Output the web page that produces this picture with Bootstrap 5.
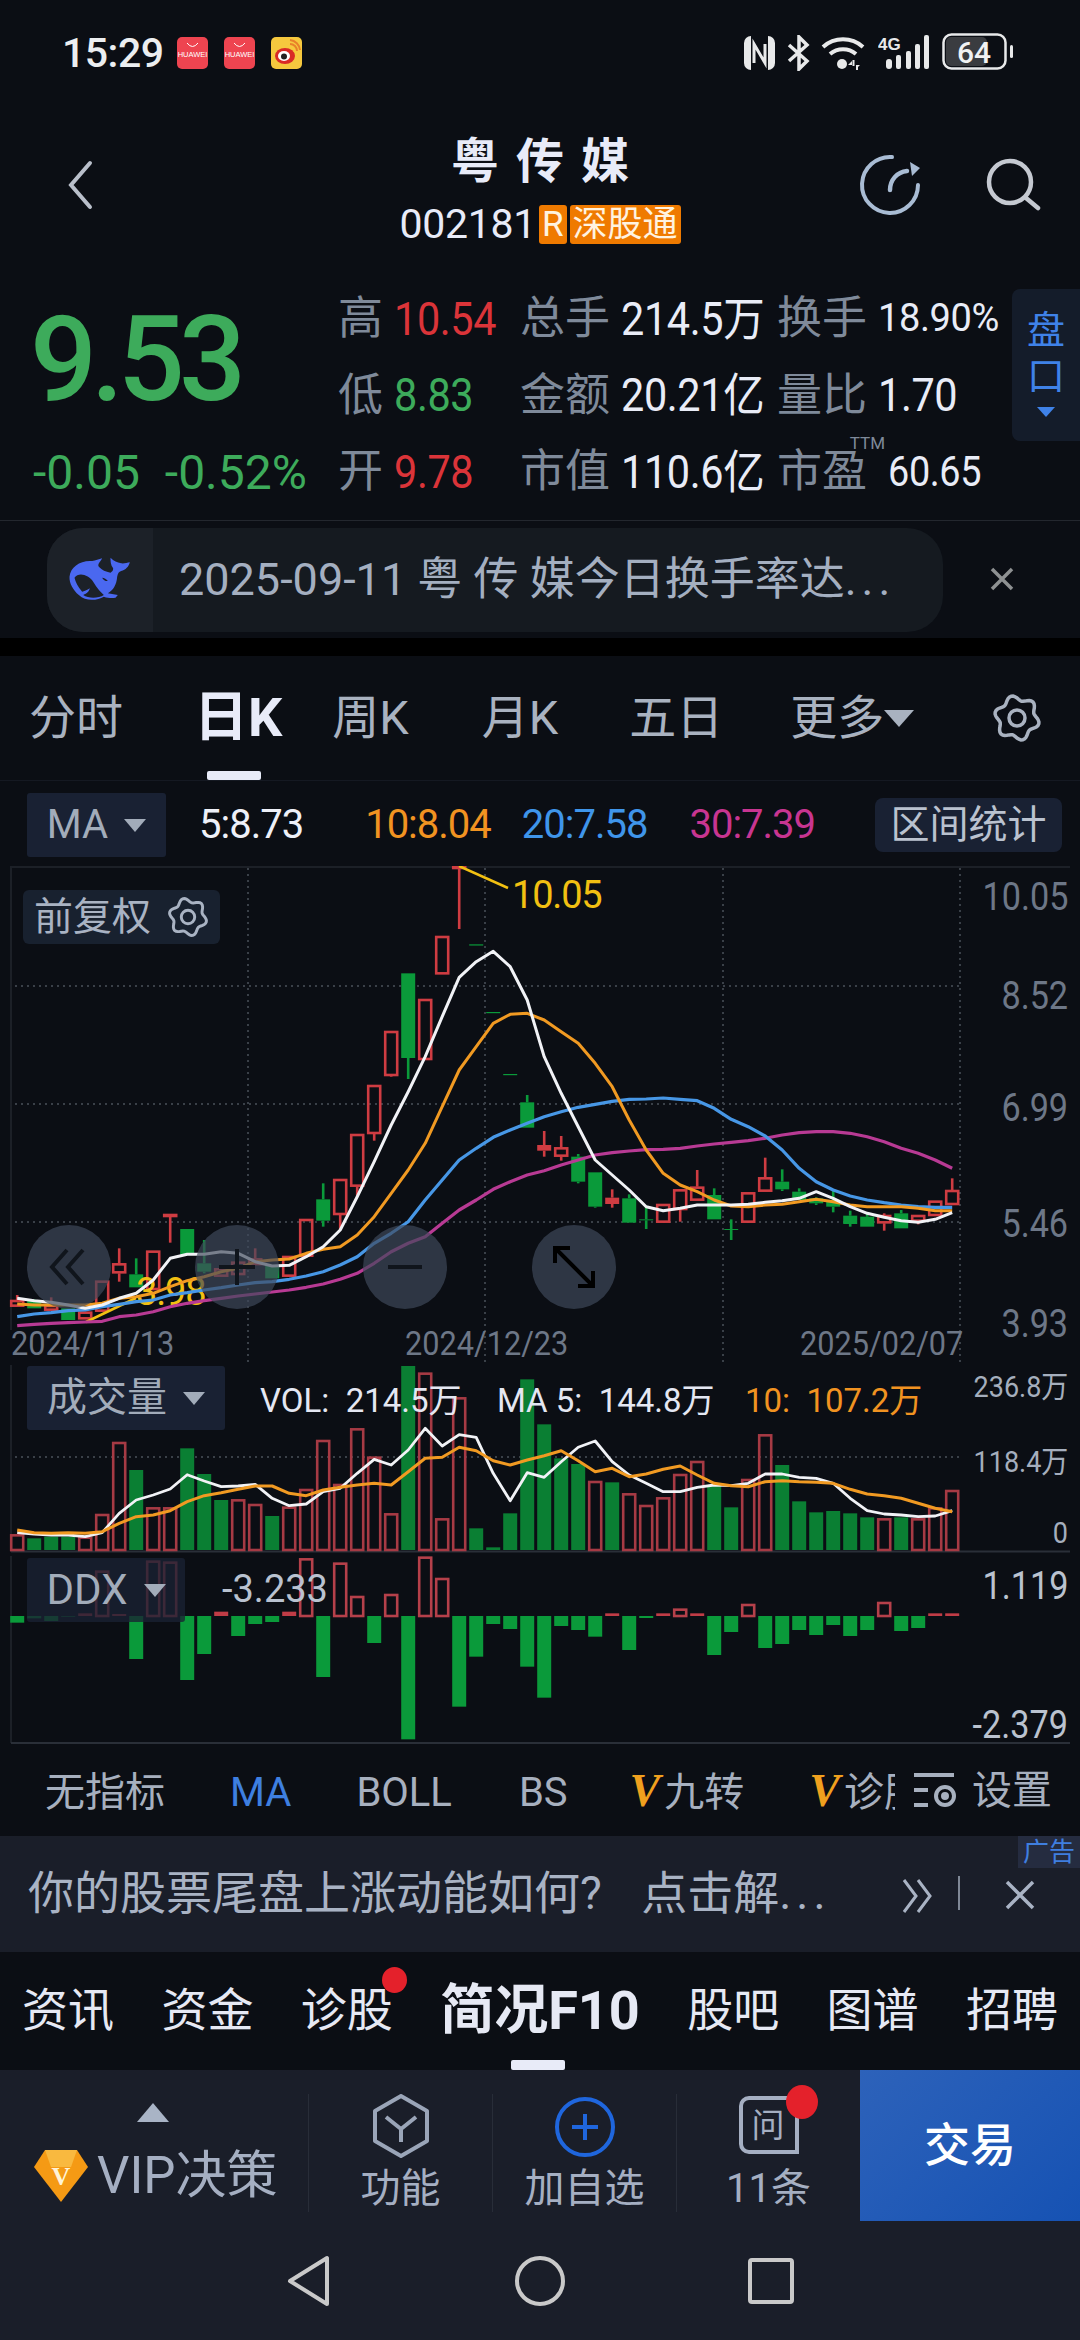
<!DOCTYPE html>
<html lang="zh-CN">
<head>
<meta charset="UTF-8">
<meta name="viewport" content="width=device-width, initial-scale=1.0">
<title>粤传媒</title>
<link href="https://cdn.jsdelivr.net/npm/bootstrap@5.3.0/dist/css/bootstrap.min.css" rel="stylesheet">
<style>
body{width:1080px;height:2340px;margin:0;overflow:hidden;background:#0b0e14;color:#e9ecf7;
  font-family:Roboto,"Noto Sans CJK SC",sans-serif;font-size:38px;line-height:1.2}
svg{display:block}
.dots{letter-spacing:5px}

/* status bar */
.sbar{height:105px;padding:33px 66px 0 62px}
.sbar-time{font-size:41px;font-weight:500;color:#eceef0;line-height:40px;margin-right:13px;letter-spacing:-.5px}
.sbar-app{width:31px;height:32px;margin-right:16px;margin-top:4px}

/* header */
.hdr{height:160px}
.hdr-side{width:260px;height:100%}
.hdr-title{font-size:48px;font-weight:700;letter-spacing:17px;margin-right:-17px;line-height:58px;color:#e8ebf8;margin-top:28px}
.hdr-code{font-size:41px;line-height:46px;margin-top:10px;color:#e8ebf8;letter-spacing:-.3px}
.hdr-tag{background:#ef7a00;border-radius:3px;color:#fff3e0;font-size:35px;line-height:39px;height:39px;padding:0 3px;margin-left:3px;letter-spacing:0}

/* quote */
.quote{height:255px}
.qprice{width:338px;padding-left:30px;flex:none}
.qprice-big{font-size:118px;line-height:118px;color:#3dab5b;letter-spacing:-6px;margin-top:36px;font-weight:500}
.qprice-sub{font-size:48px;color:#3dab5b;margin-top:26px;line-height:56px;padding-left:3px}
.qprice-sub span+span{margin-left:25px}
.qgrid{display:grid;grid-template-columns:182px 257px 235px;grid-auto-rows:76.5px;padding-top:16px;flex:none}
.qcell{display:flex;align-items:center;white-space:nowrap}
.qlb{font-size:45px;color:#7f8a9a;margin-right:11px}
.qval{display:inline-block;font-size:46px;color:#e9ecf7;transform:scaleX(.9);transform-origin:0 50%;letter-spacing:-.4px}
.qval.sm{font-size:38px;transform:none}
.qval.pe{font-size:42px;margin-left:10px}
.cred{color:#db3439}.cgreen{color:#3dab5b}
.qttm{position:relative}
.qttm i{position:absolute;top:-12px;right:-18px;font-style:normal;font-size:17px;line-height:20px;color:#7f8a9a}
.sidetab{margin-left:auto;margin-top:24px;width:68px;height:152px;background:#141c2a;border-radius:8px 0 0 8px;color:#3f82e8;
  font-size:38px;line-height:46px;padding-top:18px}
.tri-b{width:0;height:0;border-left:9px solid transparent;border-right:9px solid transparent;border-top:10px solid #3f82e8;margin-top:8px}

/* banner */
.bnr-row{height:118px;border-top:1px solid #23272e;padding:7px 0 0 47px}
.bnr{width:896px;height:104px;background:#151a20;border-radius:36px;overflow:hidden}
.bnr-logo{width:106px;height:100%;background:#1c2128}
.bnr-text{font-size:45px;color:#a4afc0;margin-left:26px;white-space:pre}
.gap-black{height:18px;background:#000}

/* period tabs */
.tabs{height:124px;padding-left:29px;color:#a9b2c0;font-size:47px}
.tabs .on{font-size:54px;font-weight:700;color:#e8ebf8}
.tab-bar{left:207px;bottom:0;width:54px;height:9px;background:#e8ebf8;border-radius:2px}
.tri-g{width:0;height:0;border-left:15px solid transparent;border-right:15px solid transparent;border-top:17px solid #a9b2c0}

/* ma row */
.marow{height:86px;border-top:1px solid #151922;padding-top:12px}
.chipbox{background:#192133;color:#a2acba;height:64px;border-radius:3px;font-size:40px}
.chipbox .arrow{width:0;height:0;border-left:11px solid transparent;border-right:11px solid transparent;border-top:13px solid #a2acba}
.mav{font-size:40px;line-height:64px;letter-spacing:-1px}
.rangebtn{background:#192133;color:#bac2cf;border-radius:8px;height:54px;width:187px;font-size:39px;line-height:54px;text-align:center;margin-left:auto;margin-right:18px;margin-top:5px}

/* charts */
.kpanel{height:499px}
.volpanel{height:188px}
.ddxpanel{height:193px}
.axlab{position:absolute;right:12px;font-size:38px;line-height:40px;color:#6d7787;transform:scaleX(.9);transform-origin:100% 50%}
.axlab.lt{color:#a5aebd;font-size:30px}
.axlab.br{color:#bac2cf}
.datelab{position:absolute;top:460px;font-size:33px;line-height:36px;color:#6d7787;transform:scaleX(.93);transform-origin:0 50%}
.fqbtn{position:absolute;left:23px;top:24px;width:197px;height:54px;background:#18212f;border-radius:6px;color:#a9b3c3;font-size:39px}
.cbtn{position:absolute;top:359px;width:84px;height:84px;border-radius:50%;background:rgba(64,74,92,.68)}
.legend{position:absolute;top:16px;font-size:33px;line-height:40px;white-space:nowrap}
.ovbox{position:absolute;left:27px;top:1px;height:64px}
.ddxbox{background:rgba(25,33,51,.78);font-size:42px}
.annot{font-size:38px;fill:#f2c012;letter-spacing:-1.2px}

/* indicator strip */
.indrow{height:90px;font-size:40px;color:#a7b0bf}
.indscroll{width:895px;flex:none;overflow:hidden;white-space:nowrap;padding-left:45px}
.indscroll span{margin-right:65px}
.indscroll .wide{margin-right:67px}
.indscroll .tight{margin-right:62px}
.indv{font-family:"Liberation Serif",serif;font-weight:700;font-style:italic;color:#f0a01e;font-size:46px;margin-right:4px!important}

/* ad */
.adbar{height:116px;background:#1a1e29;padding-left:28px;color:#a9b3c4;font-size:46px;word-spacing:28px}
.adtag{right:0;top:0;width:62px;height:32px;background:#252c40;color:#3f7fe0;font-size:26px;line-height:32px;text-align:center}

/* content tabs */
.ctabs{height:118px;font-size:46px;color:#e6e9f4;padding:0 22px}
.ctabs .on{font-size:54px;font-weight:700}
.ctab-bar{left:511px;bottom:0;width:54px;height:10px;background:#e8ebf8;border-radius:2px}
.reddot{position:absolute;border-radius:50%;background:#e4212b}

/* bottom bar */
.dock{height:151px;background:#1a1e29}
.dock-vip{width:308px;padding-top:33px;color:#a5afc2}
.tri-u{width:0;height:0;border-left:16px solid transparent;border-right:16px solid transparent;border-bottom:19px solid #a9b4c6;margin-left:137px}
.vip-line{margin:26px 0 0 33px;font-size:51px;line-height:56px}
.dock-item{width:184px;height:118px;margin-top:24px;border-left:1px solid #282d38;color:#a5afc2;font-size:40px;line-height:42px}
.dock-item span{margin-top:10px}
.dock-trade{width:220px;height:151px;background:linear-gradient(135deg,#2d62ba,#1652b3);color:#fff;font-size:46px;font-weight:500}
.navbar-sys{height:119px;background:#1a1e29}
.navcell{width:231px}
</style>
</head>
<body>

<!-- status bar -->
<div class="sbar d-flex align-items-start">
  <span class="sbar-time">15:29</span>
  <svg class="sbar-app" viewBox="0 0 31 32"><rect width="31" height="32" rx="5" fill="#ee4450"/><path d="M10 6q5.500 7 11 0" fill="none" stroke="#fff" stroke-width="1"/><text x="15.500" y="20" font-size="7.500" fill="#fff" text-anchor="middle" font-family="Liberation Sans">HUAWEI</text></svg>
  <svg class="sbar-app" viewBox="0 0 31 32"><rect width="31" height="32" rx="5" fill="#ee4450"/><path d="M10 6q5.500 7 11 0" fill="none" stroke="#fff" stroke-width="1"/><text x="15.500" y="20" font-size="7.500" fill="#fff" text-anchor="middle" font-family="Liberation Sans">HUAWEI</text></svg>
  <svg class="sbar-app" viewBox="0 0 31 32"><rect width="31" height="32" rx="5" fill="#f6c83e"/><ellipse cx="14" cy="19" rx="10" ry="8" fill="#d92a26"/><ellipse cx="13" cy="19" rx="6" ry="5" fill="#fff"/><circle cx="13" cy="19.500" r="3" fill="#222"/><path d="M19 7a7 7 0 0 1 7 7M19 3a11 11 0 0 1 10 10" fill="none" stroke="#e9802a" stroke-width="2"/></svg>
  <div class="ms-auto d-flex align-items-start">
    <svg width="31" height="34" viewBox="0 0 31 34" style="margin-top:3px"><rect width="31" height="34" rx="7" fill="#e8e9ea"/><path d="M7 0h17v34H7z" fill="#0b0e14"/><path d="M4 4v26M27 4v26" stroke="#e8e9ea" stroke-width="3"/><path d="M10 27V8l11 19V8" fill="none" stroke="#e8e9ea" stroke-width="3"/></svg>
    <svg width="24" height="36" viewBox="0 0 24 36" fill="none" stroke="#e8e9ea" stroke-width="3.500" style="margin:2px 0 0 11px"><path d="M3 10l18 16-8 8V2l8 8L3 26"/></svg>
    <svg width="46" height="36" viewBox="0 0 46 36" fill="none" stroke="#e8e9ea" stroke-width="4" style="margin:2px 0 0 11px"><path d="M2 12a30 30 0 0 1 40 0M9 19a20 20 0 0 1 26 0"/><circle cx="21" cy="29" r="5" fill="#e8e9ea" stroke="none"/><path d="M31 26l-4 4h4zM35 34l4-4h-4z" fill="#e8e9ea" stroke="none"/><path d="M32.500 25v6M36 30v5" stroke-width="2"/></svg>
    <svg width="52" height="36" viewBox="0 0 52 36" style="margin:2px 0 0 11px"><text x="0" y="15" font-size="17" font-weight="700" fill="#e8e9ea" font-family="Liberation Sans">4G</text><g fill="#e8e9ea"><rect x="8" y="24" width="6" height="10" rx="3"/><rect x="18" y="20" width="5" height="14" rx="2"/><rect x="28" y="16" width="5" height="18" rx="2"/><rect x="37" y="9" width="5" height="25" rx="2"/><rect x="46" y="0" width="5" height="34" rx="2"/></g></svg>
    <svg width="72" height="38" viewBox="0 0 72 38" style="margin-left:12px"><rect x="1.500" y="1.500" width="62" height="34" rx="8" fill="none" stroke="#e8e9ea" stroke-width="2.500"/><rect x="4" y="4" width="41" height="29" rx="5" fill="#3a3c40"/><rect x="68" y="12" width="3" height="13" rx="1.500" fill="#e8e9ea"/><text x="32" y="30" font-size="30" font-weight="500" fill="#f1f2f3" text-anchor="middle" font-family="Roboto">64</text></svg>
  </div>
</div>

<!-- header -->
<div class="hdr d-flex justify-content-between">
  <div class="hdr-side d-flex align-items-start">
    <svg width="30" height="50" viewBox="0 0 30 50" fill="none" stroke="#b9bfca" stroke-width="4" stroke-linecap="round" style="margin:55px 0 0 66px"><path d="M24 3L5 25l19 22"/></svg>
  </div>
  <div class="d-flex flex-column align-items-center">
    <div class="hdr-title">粤传媒</div>
    <div class="hdr-code d-flex align-items-center">002181<span class="hdr-tag">R</span><span class="hdr-tag">深股通</span></div>
  </div>
  <div class="hdr-side d-flex align-items-start justify-content-end">
    <svg width="66" height="66" viewBox="0 0 66 66" fill="none" stroke="#a9bcd4" stroke-width="4" stroke-linecap="round" style="margin-top:47px"><path d="M35 5A28 28 0 1 0 61 33"/><path d="M33 38C33 28 40 20 50 19" stroke-width="4.500"/><path d="M53 10l10 6-8 8z" fill="#a9bcd4" stroke="none"/></svg>
    <svg width="58" height="54" viewBox="0 0 58 54" fill="none" stroke="#c5c9d1" stroke-width="4.500" stroke-linecap="round" style="margin:52px 37px 0 62px"><circle cx="25" cy="25" r="21"/><path d="M41 41l12 10"/></svg>
  </div>
</div>

<!-- quote -->
<div class="quote d-flex">
  <div class="qprice">
    <div class="qprice-big">9.53</div>
    <div class="qprice-sub"><span>-0.05</span><span>-0.52%</span></div>
  </div>
  <div class="qgrid">
    <div class="qcell"><span class="qlb">高</span><span class="qval cred">10.54</span></div>
    <div class="qcell"><span class="qlb">总手</span><span class="qval">214.5万</span></div>
    <div class="qcell"><span class="qlb">换手</span><span class="qval sm">18.90%</span></div>
    <div class="qcell"><span class="qlb">低</span><span class="qval cgreen">8.83</span></div>
    <div class="qcell"><span class="qlb">金额</span><span class="qval">20.21亿</span></div>
    <div class="qcell"><span class="qlb">量比</span><span class="qval">1.70</span></div>
    <div class="qcell"><span class="qlb">开</span><span class="qval cred">9.78</span></div>
    <div class="qcell"><span class="qlb">市值</span><span class="qval">110.6亿</span></div>
    <div class="qcell"><span class="qlb qttm">市盈<i>TTM</i></span><span class="qval pe">60.65</span></div>
  </div>
  <div class="sidetab d-flex flex-column align-items-center"><span>盘</span><span>口</span><span class="tri-b"></span></div>
</div>

<!-- news banner -->
<div class="bnr-row d-flex">
  <div class="bnr d-flex align-items-center">
    <div class="bnr-logo d-flex align-items-center justify-content-center">
      <svg width="67" height="50" viewBox="60 50 200 150"><path d="M67 115C70 85 100 65 135 68c10 0 20-6 30-8-5 10-15 18-10 25 10 10 20 15 35 18 5-3 8-5 8-13-8-10-8-22-8-32 10 10 20 14 32 17 10 1 18-2 26-3-3 13-13 23-26 26-7 2-10 7-12 17-2 25-12 40-28 50l30 5-7 8c-10 2-20 2-35-3-20 12-55 15-75-5C78 155 66 135 67 115z" fill="#4a68f0"/><path d="M82 118c13-18 43-8 56 12 12 20 22 30 32 40-15 10-45 12-62 0 12-5 17-10 20-20-8 5-18 10-23 10-13-15-20-30-23-42z" fill="#1c2128"/><path d="M165 118c6 0 13 4 17 10-7 1-13-3-17-10z" fill="#1c2128"/></svg>
    </div>
    <div class="bnr-text">2025-09-11 粤 传 媒今日换手率达<span class="dots">...</span></div>
  </div>
  <svg class="ms-auto" width="24" height="24" viewBox="0 0 24 24" fill="none" stroke="#8e9192" stroke-width="3.500" style="margin:39px 66px 0 0"><path d="M2 2l20 20M22 2L2 22"/></svg>
</div>
<div class="gap-black"></div>

<!-- period tabs -->
<div class="tabs position-relative d-flex align-items-center">
  <span>分时</span>
  <span class="on" style="margin-left:71px">日K</span>
  <span style="margin-left:50px">周K</span>
  <span style="margin-left:73px">月K</span>
  <span style="margin-left:71px">五日</span>
  <span style="margin-left:67px">更多</span>
  <span class="tri-g"></span>
  <svg class="gear ms-auto" width="50" height="50" viewBox="0 0 50 50" style="margin-right:38px"><path fill="none" stroke="#a9b2c0" stroke-width="3.500"/><circle cx="25" cy="25" r="8" fill="none" stroke="#a9b2c0" stroke-width="3.500"/></svg>
  <div class="tab-bar position-absolute"></div>
</div>

<!-- MA row -->
<div class="marow d-flex align-items-start">
  <div class="chipbox d-flex align-items-center justify-content-center gap-3" style="margin-left:27px;width:139px"><span>MA</span><span class="arrow"></span></div>
  <span class="mav" style="margin-left:33px;color:#eef0f8">5:8.73</span>
  <span class="mav" style="margin-left:62px;color:#f19321">10:8.04</span>
  <span class="mav" style="margin-left:31px;color:#3f95ea">20:7.58</span>
  <span class="mav" style="margin-left:42px;color:#c83591">30:7.39</span>
  <div class="rangebtn">区间统计</div>
</div>

<!-- k chart -->
<div class="kpanel position-relative">
  <svg width="1080" height="499" viewBox="0 866 1080 499">
    <g id="kGrid"></g>
    <g id="kCandles"></g>
    <g fill="none" stroke="#f2c012" stroke-width="2.500"><path d="M459 866l49 22"/><path d="M86 1322l50-24"/></g>
    <text class="annot" x="512" y="908">10.05</text>
    <text class="annot" x="136" y="1305">3.98</text>
    <g id="kLines" fill="none" stroke-linejoin="round"></g>
  </svg>
  <span class="axlab" style="top:11px">10.05</span>
  <span class="axlab" style="top:110px">8.52</span>
  <span class="axlab" style="top:222px">6.99</span>
  <span class="axlab" style="top:338px">5.46</span>
  <span class="axlab" style="top:438px">3.93</span>
  <span class="datelab" style="left:11px">2024/11/13</span>
  <span class="datelab" style="left:405px">2024/12/23</span>
  <span class="datelab" style="left:800px">2025/02/07</span>
  <div class="fqbtn d-flex align-items-center justify-content-center gap-3"><span>前复权</span>
    <svg class="gear" width="42" height="42" viewBox="0 0 50 50"><path fill="none" stroke="#a9b3c3" stroke-width="3.500"/><circle cx="25" cy="25" r="8" fill="none" stroke="#a9b3c3" stroke-width="3.500"/></svg>
  </div>
  <div class="cbtn d-flex align-items-center justify-content-center" style="left:27px"><svg width="40" height="40" viewBox="0 0 40 40" fill="none" stroke="#10151c" stroke-width="4"><path d="M18 3L3 20l15 17M34 3L19 20l15 17"/></svg></div>
  <div class="cbtn d-flex align-items-center justify-content-center" style="left:195px"><svg width="40" height="40" viewBox="0 0 40 40" fill="none" stroke="#10151c" stroke-width="4"><path d="M2 20h36M20 2v36"/></svg></div>
  <div class="cbtn d-flex align-items-center justify-content-center" style="left:363px"><svg width="40" height="40" viewBox="0 0 40 40" fill="none" stroke="#10151c" stroke-width="4"><path d="M3 20h34"/></svg></div>
  <div class="cbtn d-flex align-items-center justify-content-center" style="left:532px"><svg width="44" height="44" viewBox="0 0 44 44" fill="none" stroke="#000" stroke-width="4"><path d="M3 18V3h15M3 3l38 38M41 26v15H26"/></svg></div>
</div>

<!-- volume -->
<div class="volpanel position-relative">
  <svg width="1080" height="188" viewBox="0 1365 1080 188">
    <g id="vGrid"></g><g id="vBars"></g><g id="vLines" fill="none" stroke-linejoin="round"></g>
  </svg>
  <div class="chipbox ovbox d-flex align-items-center justify-content-center gap-3" style="width:198px"><span>成交量</span><span class="arrow"></span></div>
  <span class="legend" style="left:260px;color:#e4e7f2">VOL:&nbsp; 214.5万</span>
  <span class="legend" style="left:497px;color:#e4e7f2">MA 5:&nbsp; 144.8万</span>
  <span class="legend" style="left:745px;color:#f19321">10:&nbsp; 107.2万</span>
  <span class="axlab lt" style="top:2px">236.8万</span>
  <span class="axlab lt" style="top:77px">118.4万</span>
  <span class="axlab lt" style="top:148px">0</span>
</div>

<!-- ddx -->
<div class="ddxpanel position-relative">
  <svg width="1080" height="193" viewBox="0 1553 1080 193">
    <g id="dGrid"></g><g id="dBars"></g>
  </svg>
  <div class="chipbox ddxbox ovbox d-flex align-items-center justify-content-center gap-3" style="top:5px;width:158px"><span>DDX</span><span class="arrow"></span></div>
  <span class="legend" style="left:222px;top:16px;font-size:38px;color:#b9c2d0">-3.233</span>
  <span class="axlab br" style="top:13px">1.119</span>
  <span class="axlab br" style="top:152px">-2.379</span>
</div>

<!-- indicators -->
<div class="indrow d-flex align-items-center">
  <div class="indscroll">
    <span>无指标</span><span style="color:#3e7fe0">MA</span><span class="wide">BOLL</span><span class="tight">BS</span><span class="indv">V</span><span>九转</span><span class="indv">V</span><span>诊股</span>
  </div>
  <div class="d-flex align-items-center ms-auto" style="margin-right:28px">
    <svg width="44" height="38" viewBox="0 0 44 38" fill="none" stroke="#a7b0bf" stroke-width="4"><path d="M2 3h40M2 18h14M2 33h14"/><circle cx="33" cy="24" r="9"/><circle cx="33" cy="24" r="2" fill="#a7b0bf"/></svg>
    <span style="margin-left:16px">设置</span>
  </div>
</div>

<!-- ad -->
<div class="adbar position-relative d-flex align-items-center">
  <span>你的股票尾盘上涨动能如何? 点击解<span class="dots">...</span></span>
  <svg class="position-absolute" style="left:902px;top:42px" width="32" height="36" viewBox="0 0 32 36" fill="none" stroke="#a9b3c4" stroke-width="3"><path d="M2 2l12 16L2 34M16 2l12 16-12 16"/></svg>
  <svg class="position-absolute" style="left:958px;top:40px" width="2" height="34"><rect width="2" height="34" fill="#7f8896"/></svg>
  <svg class="position-absolute" style="left:1005px;top:44px" width="30" height="30" viewBox="0 0 30 30" fill="none" stroke="#a9b3c4" stroke-width="3.500"><path d="M2 2l26 26M28 2L2 28"/></svg>
  <span class="adtag position-absolute">广告</span>
</div>

<!-- content tabs -->
<div class="ctabs position-relative d-flex align-items-center justify-content-between">
  <span>资讯</span><span>资金</span><span class="position-relative">诊股<i class="reddot" style="width:25px;height:26px;right:-14px;top:-16px"></i></span><span class="on">简况F10</span><span>股吧</span><span>图谱</span><span>招聘</span>
  <div class="ctab-bar position-absolute"></div>
</div>

<!-- dock -->
<div class="dock d-flex">
  <div class="dock-vip">
    <div class="tri-u"></div>
    <div class="vip-line d-flex align-items-center gap-2">
      <svg width="56" height="54" viewBox="0 0 56 54"><path d="M12 1h32l11 17-27 35L1 18z" fill="#f59a14"/><path d="M12 1h32l-6 17H18z" fill="#f9b93f"/><text x="28" y="36" font-size="26" font-weight="700" fill="#fff3d6" text-anchor="middle" font-family="Liberation Serif">V</text></svg>
      <span>VIP决策</span>
    </div>
  </div>
  <div class="dock-item d-flex flex-column align-items-center">
    <svg width="60" height="64" viewBox="0 0 60 64" fill="none" stroke="#9aa5b8" stroke-width="4" stroke-linejoin="round"><path d="M30 2l26 15v30L30 62 4 47V17zM15 23l15 12 15-12M30 35v13"/></svg>
    <span>功能</span>
  </div>
  <div class="dock-item d-flex flex-column align-items-center">
    <svg width="62" height="64" viewBox="0 0 62 64" fill="none" stroke="#1f66dd" stroke-width="4"><circle cx="31" cy="33" r="28"/><path d="M31 20v26M18 33h26"/></svg>
    <span>加自选</span>
  </div>
  <div class="dock-item position-relative d-flex flex-column align-items-center">
    <svg width="60" height="64" viewBox="0 0 60 64"><path d="M10 4h48v54H10a8 8 0 0 1-8-8V12a8 8 0 0 1 8-8z" fill="none" stroke="#a5afc2" stroke-width="4"/><text x="29" y="43" font-size="33" fill="#a5afc2" text-anchor="middle" font-family="Noto Sans CJK SC">问</text></svg>
    <span>11条</span>
    <i class="reddot" style="left:109px;top:-9px;width:32px;height:34px"></i>
  </div>
  <div class="dock-trade d-flex align-items-center justify-content-center">交易</div>
</div>

<!-- system nav -->
<div class="navbar-sys d-flex align-items-center justify-content-center">
  <div class="navcell d-flex justify-content-center"><svg width="46" height="52" viewBox="0 0 46 52" fill="none" stroke="#c9c9c9" stroke-width="4" stroke-linejoin="round"><path d="M41 3v46L4 26z"/></svg></div>
  <div class="navcell d-flex justify-content-center"><svg width="52" height="52" viewBox="0 0 52 52" fill="none" stroke="#c9c9c9" stroke-width="4"><circle cx="26" cy="26" r="23"/></svg></div>
  <div class="navcell d-flex justify-content-center"><svg width="46" height="46" viewBox="0 0 46 46" fill="none" stroke="#c9c9c9" stroke-width="4"><rect x="2" y="2" width="42" height="42" rx="2"/></svg></div>
</div>

<script>
  var NS = "http://www.w3.org/2000/svg";
  var RED = "#cf3c42", GREEN = "#0a9a3a";
  function xAt(i) { return 17.2 + 17 * i; }
  function el(parent, tag, attrs) {
    var n = document.createElementNS(NS, tag);
    for (var k in attrs) n.setAttribute(k, attrs[k]);
    parent.appendChild(n);
    return n;
  }
  function $(id) { return document.getElementById(id); }

  // six lobed gear outline
  document.querySelectorAll("svg.gear path").forEach(function(p) {
    var pts = [];
    for (var a = 0; a < 360; a += 5) {
      var t = a * Math.PI / 180, r = 20 + 2.6 * Math.cos(6 * t + Math.PI / 2 * 3);
      pts.push((25 + r * Math.cos(t)).toFixed(1) + " " + (25 + r * Math.sin(t)).toFixed(1));
    }
    p.setAttribute("d", "M" + pts.join("L") + "Z");
  });

  // grid lines
  var dotted = { stroke: "#3a4048", "stroke-width": 2, "stroke-dasharray": "2 4" };
  function gridH(g, y) { el(g, "line", Object.assign({ x1: 15, x2: 960, y1: y, y2: y }, dotted)); }
  function gridV(g, x, y1, y2) { el(g, "line", Object.assign({ x1: x, x2: x, y1: y1, y2: y2 }, dotted)); }

  var kg = $("kGrid");
  el(kg, "line", { x1: 11, x2: 11, y1: 866, y2: 1330, stroke: "#1c2027", "stroke-width": 2 });
  el(kg, "line", { x1: 11, x2: 1070, y1: 867, y2: 867, stroke: "#1c2027", "stroke-width": 2 });
  [986, 1104, 1222].forEach(function(y) { gridH(kg, y); });
  [248, 485, 723, 960].forEach(function(x) { gridV(kg, x, 868, 1365); });

  // candles: wick top, body top, body bottom, wick bottom, type (zoom units, y = 860 + z / 3)
  var candles = [
    [1305,1320,1340,1340,"r"],[1318,1320,1345,1345,"g"],[1312,1335,1352,1352,"r"],[1345,1345,1380,1380,"g"],
    [1355,1355,1378,1378,"r"],[1262,1262,1355,1355,"r"],[1165,1210,1240,1265,"r"],[1195,1243,1282,1282,"g"],
    [1172,1172,1290,1290,"r"],[1062,1062,1066,1148,"r"],[1107,1107,1185,1185,"g"],[1140,1210,1235,1240,"g"],
    [1225,1225,1250,1250,"r"],[1205,1205,1245,1245,"r"],[1165,1195,1215,1215,"r"],[1215,1215,1255,1255,"g"],
    [1188,1188,1250,1250,"r"],[1077,1077,1190,1190,"r"],[970,1018,1082,1100,"g"],[957,957,1065,1110,"r"],
    [822,822,980,1007,"r"],[675,675,822,842,"r"],[513,513,648,650,"r"],[340,340,594,657,"g"],
    [417,417,600,600,"r"],[228,228,343,343,"r"],[18,18,24,207,"r"],[253,253,255,255,"d"],
    [456,456,458,458,"d"],[642,642,644,644,"d"],[705,727,803,803,"g"],[813,855,872,890,"f"],
    [828,862,890,902,"r"],[882,890,965,970,"g"],[937,937,1040,1043,"g"],[988,1013,1032,1043,"f"],
    [1003,1015,1088,1088,"g"],[1040,1078,1081,1107,"g"],[1032,1032,1088,1088,"r"],[988,988,1050,1085,"r"],
    [930,980,1022,1022,"r"],[985,1005,1078,1078,"g"],[1078,1107,1110,1140,"g"],[997,997,1088,1088,"r"],
    [893,952,995,995,"r"],[928,965,988,993,"g"],[985,995,1020,1020,"g"],[1012,1015,1030,1035,"g"],
    [990,1020,1040,1057,"g"],[1052,1067,1092,1100,"g"],[1062,1070,1100,1100,"g"],[1060,1065,1090,1112,"r"],
    [1050,1060,1105,1105,"g"],[1065,1065,1085,1093,"r"],[1022,1022,1068,1068,"r"],[955,990,1035,1035,"r"]
  ];
  function ky(z) { return 860 + z / 3; }
  var kc = $("kCandles");
  candles.forEach(function(c, i) {
    var x = xAt(i), t = c[4], col = (t == "r" || t == "f") ? RED : GREEN;
    if (t == "d") {
      el(kc, "rect", { x: x - 7, y: ky(c[1]), width: 14, height: 1.2, fill: GREEN });
      return;
    }
    if (c[0] < c[1]) el(kc, "rect", { x: x - 1.3, y: ky(c[0]), width: 2.6, height: ky(c[1]) - ky(c[0]), fill: col });
    if (c[3] > c[2]) el(kc, "rect", { x: x - 1.3, y: ky(c[2]), width: 2.6, height: ky(c[3]) - ky(c[2]), fill: col });
    if (t == "r") {
      el(kc, "rect", { x: x - 6, y: ky(c[1]) + 1, width: 12, height: Math.max(ky(c[2]) - ky(c[1]) - 2, 1), fill: "none", stroke: col, "stroke-width": 2.6 });
    } else {
      el(kc, "rect", { x: x - 7, y: ky(c[1]), width: 14, height: ky(c[2]) - ky(c[1]), fill: col });
    }
  });

  function polyline(g, vals, toY, color, width) {
    var pts = vals.map(function(z, i) { return xAt(i).toFixed(1) + "," + toY(z).toFixed(1); }).join(" ");
    el(g, "polyline", { points: pts, stroke: color, "stroke-width": width });
  }

  var ma30 = [1397,1393,1390,1388,1386,1384,1370,1365,1355,1340,1330,1322,1315,1308,1302,1296,1290,1282,1272,1258,1240,1210,1175,1150,1130,1090,1050,1020,988,965,945,932,915,900,885,878,873,869,868,865,858,852,847,842,835,825,818,815,815,820,830,845,865,880,900,925];
  var ma20 = [1370,1362,1358,1352,1350,1340,1333,1325,1320,1305,1298,1290,1283,1275,1268,1265,1258,1248,1235,1215,1190,1150,1120,1085,1020,960,900,865,832,810,790,770,755,742,733,724,718,717,714,718,722,745,778,800,828,870,925,965,990,1008,1020,1028,1035,1040,1042,1042];
  var ma10 = [1332,1335,1335,1335,1335,1330,1315,1310,1300,1280,1262,1250,1235,1225,1205,1200,1197,1180,1168,1160,1125,1070,1000,930,850,740,630,560,490,463,460,480,515,550,610,680,780,870,940,975,995,1020,1038,1040,1035,1033,1025,1018,1025,1035,1040,1040,1040,1045,1052,1052];
  var ma5 = [1315,1322,1327,1335,1345,1335,1315,1300,1260,1195,1183,1183,1175,1180,1205,1218,1216,1190,1160,1110,1010,905,795,695,590,470,352,305,274,320,420,590,700,800,900,945,990,1040,1052,1045,1035,1035,1035,1033,1027,1022,1015,995,1015,1040,1060,1072,1082,1087,1078,1058];
  var kl = $("kLines");
  polyline(kl, ma30, ky, "#b83a94", 3.2);
  polyline(kl, ma20, ky, "#4797e6", 3.2);
  polyline(kl, ma10, ky, "#f19a22", 3);
  polyline(kl, ma5, ky, "#f1f2f6", 3);

  // volume bars, tops in zoom units (y = 1340 + z / 3), base 630
  var vols = [583,595,590,590,590,522,306,390,502,502,325,402,480,478,492,528,500,447,300,432,265,350,520,78,98,535,172,565,622,520,118,253,355,372,423,427,460,495,472,402,363,435,502,417,283,375,484,517,513,520,532,535,532,535,502,450];
  var vType = "rgggrrrgrrgggrrgrrrrrrrgrrrgggggggrgrrrrrggrrggggggrgrrr".split("");
  function vy(z) { return 1340 + z / 3; }
  var vb = $("vBars"), vg = $("vGrid");
  el(vg, "line", { x1: 11, x2: 11, y1: 1365, y2: 1552, stroke: "#1c2027", "stroke-width": 2 });
  el(vg, "line", { x1: 11, x2: 1070, y1: 1551.5, y2: 1551.5, stroke: "#2a2f38", "stroke-width": 2 });
  gridH(vg, 1457);
  vols.forEach(function(z, i) {
    var x = xAt(i), y = vy(z), b = vy(630);
    if (vType[i] == "g") el(vb, "rect", { x: x - 7, y: y, width: 14, height: b - y, fill: "#0a7f33" });
    else el(vb, "rect", { x: x - 6, y: y + 1, width: 12, height: b - y - 1, fill: "none", stroke: "#a63a44", "stroke-width": 2.6 });
  });
  var vl = $("vLines");
  var vma10 = [570,578,580,578,580,575,550,530,525,512,485,467,458,448,438,438,460,467,450,442,435,430,435,395,355,352,322,332,362,375,360,347,332,362,395,385,410,402,388,378,405,430,437,440,425,422,425,427,430,448,462,467,475,490,505,515];
  var vma5 = [578,582,585,585,590,578,520,480,465,447,404,423,440,438,433,475,497,492,455,445,400,358,375,330,265,318,284,292,400,482,398,412,365,322,303,365,405,430,455,455,442,435,437,430,402,402,412,415,430,475,512,522,525,530,528,512];
  polyline(vl, vma5, vy, "#f1f2f6", 2.8);
  polyline(vl, vma10, vy, "#f19a22", 3);

  // ddx bars, end value in zoom units, zero at 828
  var ddx = [848,835,843,830,820,692,822,957,662,665,1020,942,815,888,852,846,815,655,1011,668,768,909,762,1198,650,714,1100,950,852,867,980,1073,858,870,890,820,930,834,820,806,820,945,876,792,924,912,870,885,855,888,870,786,873,864,820,820];
  var db = $("dBars"), dg = $("dGrid");
  el(dg, "line", { x1: 11, x2: 11, y1: 1556, y2: 1743, stroke: "#1c2027", "stroke-width": 2 });
  el(dg, "line", { x1: 11, x2: 1070, y1: 1743, y2: 1743, stroke: "#2a2f38", "stroke-width": 2 });
  ddx.forEach(function(z, i) {
    var x = xAt(i), y = vy(z), b = vy(828);
    if (z > 828) el(db, "rect", { x: x - 7, y: b, width: 14, height: y - b, fill: "#0a9a3a" });
    else if (828 - z < 15) el(db, "rect", { x: x - 7, y: y, width: 14, height: b - y, fill: "#c03c46" });
    else el(db, "rect", { x: x - 6, y: y + 1, width: 12, height: b - y - 1, fill: "none", stroke: "#b5404a", "stroke-width": 2.6 });
  });
</script>
<script src="https://cdn.jsdelivr.net/npm/bootstrap@5.3.0/dist/js/bootstrap.bundle.min.js"></script>
</body>
</html>
